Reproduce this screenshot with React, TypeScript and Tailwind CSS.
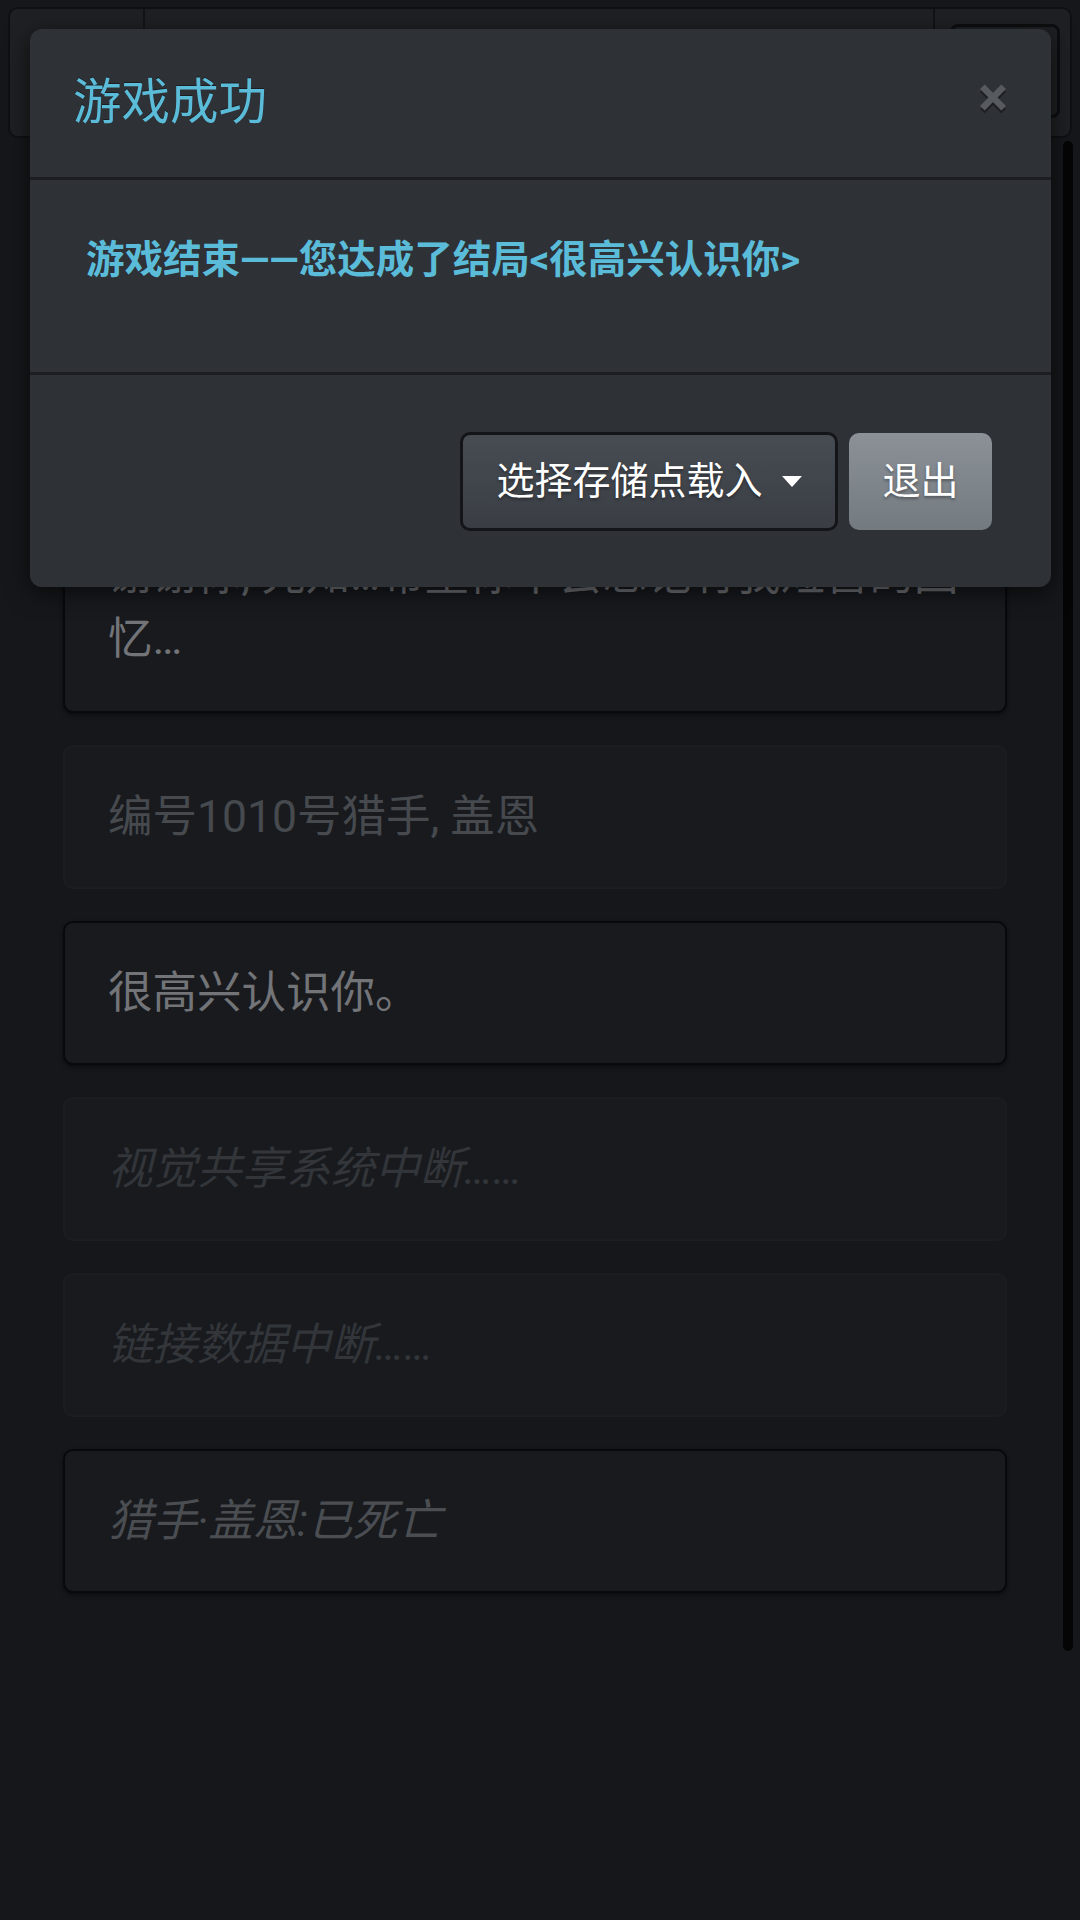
import React from 'react';

const FONT = "Roboto, 'Noto Sans CJK SC', 'Noto Sans', sans-serif";

type Msg = { text: string; tone: 'strong' | 'dim' | 'faint' | 'dead'; italic?: boolean };

const messages: Msg[] = [
  { text: '编号1010号猎手, 盖恩', tone: 'dim' },
  { text: '很高兴认识你。', tone: 'strong' },
  { text: '视觉共享系统中断……', tone: 'faint', italic: true },
  { text: '链接数据中断……', tone: 'faint', italic: true },
  { text: '猎手·盖恩:已死亡', tone: 'dead', italic: true },
];

function Card({ msg }: { msg: Msg }) {
  const dark = msg.tone === 'strong' || msg.tone === 'dead';
  return (
    <div
      className={
        'rounded-[10px] bg-[#181a1e] px-[43px] py-[38px] ' +
        (dark
          ? 'border-2 border-[#08090b] shadow-[0_2px_4px_rgba(0,0,0,0.5)]'
          : 'border-2 border-[#1b1d21]')
      }
    >
      <p
        className={
          'text-[44.5px] leading-[64px] ' +
          (msg.italic ? 'italic ' : '') +
          (msg.tone === 'strong'
            ? 'text-[#727478]'
            : msg.tone === 'dim'
              ? 'text-[#46494d]'
              : msg.tone === 'dead'
                ? 'text-[#4a4d51]'
                : 'text-[#323539]')
        }
      >
        {msg.text}
      </p>
    </div>
  );
}

export default function App() {
  return (
    <div className="relative min-h-[1920px] bg-[#15171a] overflow-hidden" style={{ fontFamily: FONT }}>
      {/* top bar behind the dialog */}
      <div className="pt-[7px] px-[8px]">
        <div className="flex h-[131px] rounded-[10px] border-2 border-[#0f1012] bg-[#1e2023]">
          <div className="w-[135px] border-r-2 border-[#121315]" />
          <div className="flex-1 border-r-2 border-[#121315]" />
          <div className="w-[135px] flex items-start justify-end pt-[15px] pr-[10px]">
            <div className="w-[110px] h-[94px] rounded-[8px] border-[3px] border-[#0d0e10] bg-[#1e2023]" />
          </div>
        </div>
      </div>

      {/* message list */}
      <div className="ml-[63px] w-[944px] pt-[363px] flex flex-col gap-[32px]">
        <div className="rounded-[10px] bg-[#181a1e] border-2 border-[#08090b] pl-[43px] pr-[16px] py-[40px] shadow-[0_2px_4px_rgba(0,0,0,0.5)]">
          <p className="text-[44.5px] leading-[64px] text-[#727478]">
            谢谢你, 先知…希望你不会忘记有我短暂的回忆…
          </p>
        </div>
        {messages.map((m, i) => (
          <Card key={i} msg={m} />
        ))}
      </div>

      {/* scrollbar */}
      <div className="absolute right-[7px] top-[141px] w-[10px] h-[1510px] rounded-full bg-[#050506]" />

      {/* dialog */}
      <div className="absolute left-[30px] top-[29px] w-[1021px] rounded-[12px] bg-[#2e3136] shadow-[0_6px_24px_rgba(0,0,0,0.6)]">
        <div className="flex items-center justify-between h-[151px] px-[43px] border-b-[3px] border-[#1c1e21]">
          <h4 className="text-[48.5px] leading-[60px] text-[#5bbcd9] [text-shadow:0_-1px_0_rgba(0,0,0,0.4)]">
            游戏成功
          </h4>
          <span className="text-[56px] font-bold leading-none text-[#575b60] [text-shadow:0_3px_0_rgba(0,0,0,0.35)] -mt-[12px]">
            ×
          </span>
        </div>
        <div className="h-[195px] pl-[56px] pt-[54px] border-b-[3px] border-[#1c1e21]">
          <h5 className="text-[38.5px] leading-[52px] font-bold text-[#5bbcd9]">
            游戏结束——您达成了结局&lt;很高兴认识你&gt;
          </h5>
        </div>
        <div className="h-[212px] flex items-center justify-end gap-[11px] pr-[59px]">
          <button className="h-[99px] w-[378px] flex items-center justify-center gap-[19px] rounded-[10px] border-[3px] border-[#141518] bg-gradient-to-b from-[#474c53] to-[#3a3e44] text-white text-[38px] [text-shadow:0_2px_3px_rgba(0,0,0,0.35)]">
            <span>选择存储点载入</span>
            <svg width="20" height="11" viewBox="0 0 20 11">
              <path d="M0 0 L20 0 L10 11 Z" fill="#ffffff" />
            </svg>
          </button>
          <button className="h-[97px] w-[143px] rounded-[10px] bg-gradient-to-b from-[#8b9197] to-[#737a80] text-white text-[38px] [text-shadow:0_2px_3px_rgba(0,0,0,0.35)]">
            退出
          </button>
        </div>
      </div>
    </div>
  );
}
